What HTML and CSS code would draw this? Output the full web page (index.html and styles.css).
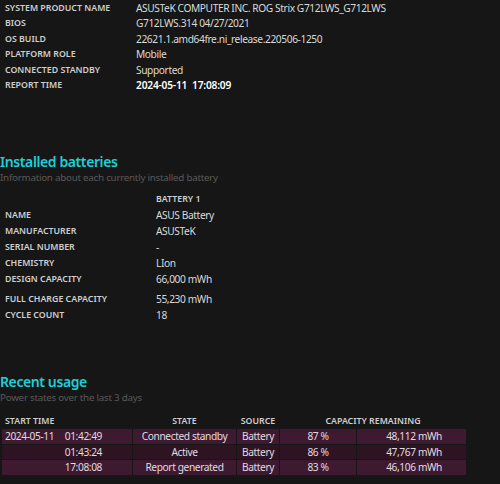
FILE: index.html
```html
<!DOCTYPE html>
<html>
<head>
<meta charset="utf-8">
<link rel="stylesheet" href="styles.css">
</head>
<body>
<table class="info">
  <tr><td class="lbl">SYSTEM PRODUCT NAME</td><td class="val">ASUSTeK COMPUTER INC. ROG Strix G712LWS_G712LWS</td></tr>
  <tr><td class="lbl">BIOS</td><td class="val">G712LWS.314 04/27/2021</td></tr>
  <tr><td class="lbl">OS BUILD</td><td class="val">22621.1.amd64fre.ni_release.220506-1250</td></tr>
  <tr><td class="lbl">PLATFORM ROLE</td><td class="val">Mobile</td></tr>
  <tr><td class="lbl">CONNECTED STANDBY</td><td class="val">Supported</td></tr>
  <tr><td class="lbl">REPORT TIME</td><td class="val strong">2024-05-11&nbsp;&nbsp;17:08:09</td></tr>
</table>

<section class="sec batteries">
  <h2 class="title">Installed batteries</h2>
  <div class="desc">Information about each currently installed battery</div>
  <table class="bat">
    <tr><td class="lbl"></td><td class="hdr">BATTERY 1</td></tr>
    <tr><td class="lbl">NAME</td><td class="val">ASUS Battery</td></tr>
    <tr><td class="lbl">MANUFACTURER</td><td class="val">ASUSTeK</td></tr>
    <tr><td class="lbl">SERIAL NUMBER</td><td class="val">-</td></tr>
    <tr><td class="lbl">CHEMISTRY</td><td class="val">LIon</td></tr>
    <tr class="spaced"><td class="lbl">DESIGN CAPACITY</td><td class="val">66,000 mWh</td></tr>
    <tr><td class="lbl">FULL CHARGE CAPACITY</td><td class="val">55,230 mWh</td></tr>
    <tr><td class="lbl">CYCLE COUNT</td><td class="val">18</td></tr>
  </table>
</section>

<section class="sec usage">
  <h2 class="title">Recent usage</h2>
  <div class="desc">Power states over the last 3 days</div>
  <table class="use">
    <thead>
      <tr><th class="c-time">START TIME</th><th class="c-state">STATE</th><th class="c-src">SOURCE</th><th class="c-cap" colspan="2">CAPACITY REMAINING</th></tr>
    </thead>
    <tbody>
      <tr class="odd"><td class="c-time"><span class="date">2024-05-11</span>01:42:49</td><td class="c-state">Connected standby</td><td class="c-src">Battery</td><td class="c-pct">87 %</td><td class="c-mwh">48,112 mWh</td></tr>
      <tr class="even"><td class="c-time">01:43:24</td><td class="c-state">Active</td><td class="c-src">Battery</td><td class="c-pct">86 %</td><td class="c-mwh">47,767 mWh</td></tr>
      <tr class="odd"><td class="c-time">17:08:08</td><td class="c-state">Report generated</td><td class="c-src">Battery</td><td class="c-pct">83 %</td><td class="c-mwh">46,106 mWh</td></tr>
    </tbody>
  </table>
</section>
</body>
</html>
```

FILE: styles.css
```css
html, body {
  margin: 0;
  padding: 0;
  background: #161616;
}
body {
  font-family: "Noto Sans", "Open Sans", sans-serif;
  font-size: 10px;
  color: #dcdcdc;
  overflow: hidden;
  height: 484px;
}
table {
  border-collapse: collapse;
}
.info {
  margin-top: 0.5px;
}
.info td {
  height: 15.6px;
  padding: 0;
  line-height: 15.6px;
  white-space: nowrap;
}
.lbl {
  font-size: 8.8px;
  font-weight: 600;
  color: #cfcfcf;
  padding-left: 5px !important;
}
.info .lbl {
  width: 131px;
}
.val {
  font-size: 10.2px;
  letter-spacing: -0.4px;
  color: #dadada;
}
.strong {
  font-weight: 600;
  color: #ffffff;
  letter-spacing: -0.2px;
}
.title {
  margin: 0;
  font-size: 14px;
  font-weight: 600;
  letter-spacing: -0.4px;
  color: #1fcfd9;
  line-height: 18px;
}
.desc {
  font-size: 9.8px;
  letter-spacing: -0.25px;
  color: #595959;
  line-height: 13px;
}
.batteries {
  padding-top: 59px;
}
.bat {
  margin-top: 7px;
}
.bat td {
  padding: 0;
  height: 16px;
  line-height: 16px;
  white-space: nowrap;
}
.bat .lbl {
  width: 151px;
}
.bat .hdr {
  font-size: 8.8px;
  font-weight: 600;
  color: #cfcfcf;
}
.bat .spaced td {
  padding-bottom: 4px;
}
.usage {
  padding-top: 50px;
}
.use {
  margin-top: 9px;
  margin-left: 1px;
  border-collapse: separate;
  border-spacing: 1px;
}
.use th {
  font-size: 8.8px;
  font-weight: 600;
  color: #cfcfcf;
  height: 14px;
  padding: 0;
  line-height: 14px;
  white-space: nowrap;
}
.use td {
  height: 14.5px;
  line-height: 14.5px;
  padding: 0;
  font-size: 10.2px;
  letter-spacing: -0.4px;
  color: #e0dce0;
  white-space: nowrap;
}
.use .odd td {
  background: #3d1a2f;
}
.use .even td {
  background: #2e1423;
}
.use th.c-time {
  text-align: left;
  padding-left: 3px;
}
.use td.c-time {
  width: 130px;
  text-align: right;
  padding-right: 30px;
  box-sizing: border-box;
}
.date {
  float: left;
  padding-left: 3px;
}
.c-state {
  width: 103px;
  text-align: center;
}
.c-src {
  width: 42px;
  text-align: center;
}
.use th.c-cap {
  text-align: center;
}
.c-pct {
  width: 76px;
  text-align: center;
}
.c-mwh {
  width: 109px;
  text-align: right;
  padding-right: 24px !important;
  box-sizing: border-box;
}
```
